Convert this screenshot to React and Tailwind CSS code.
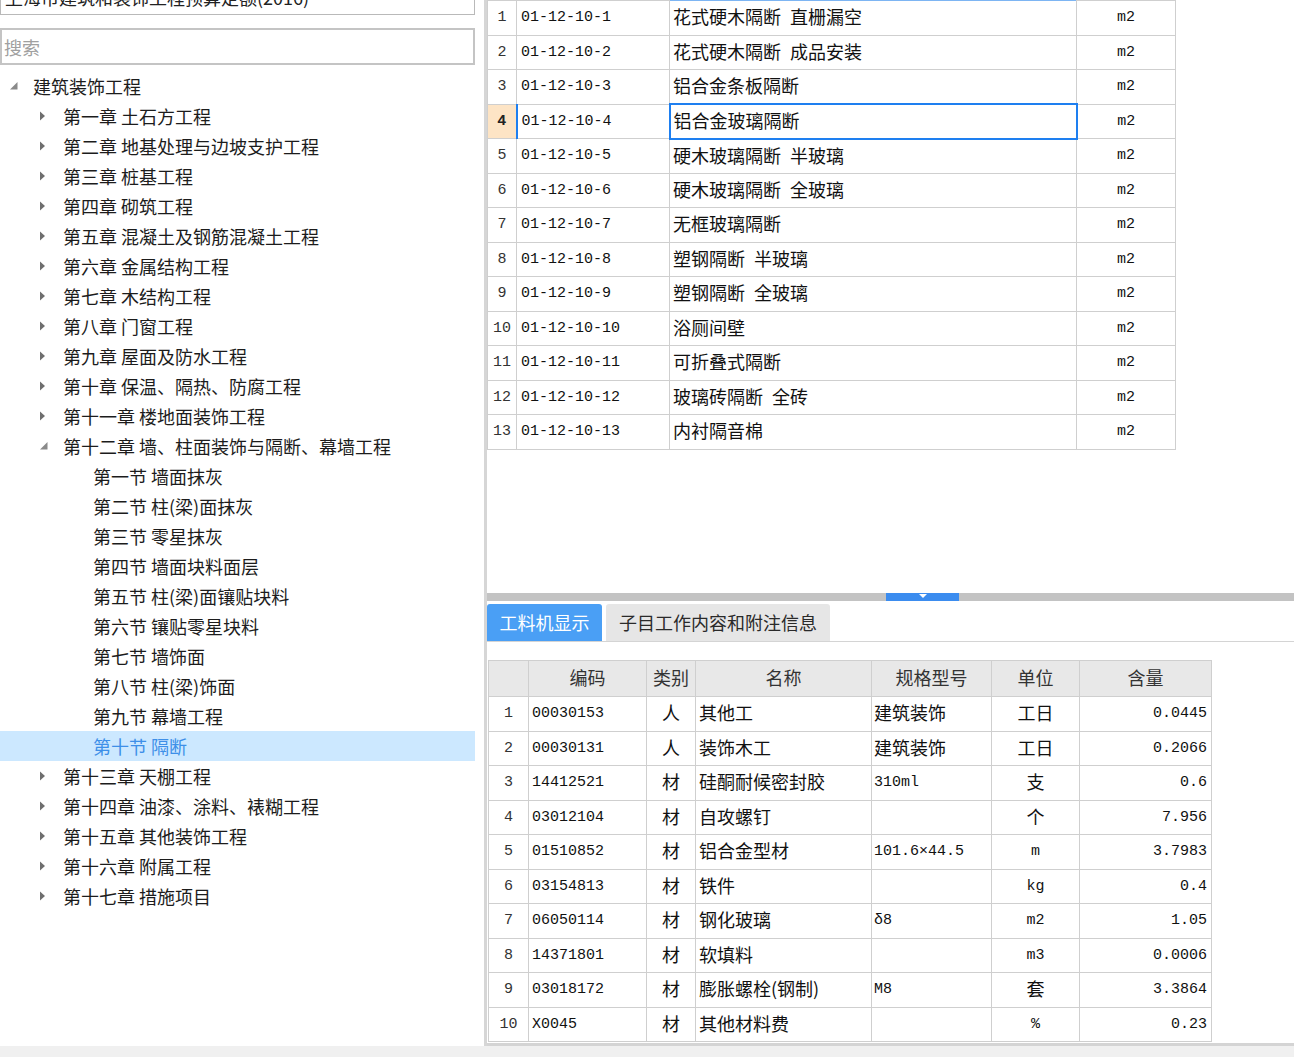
import React from "react";

const cjk = "font-['Noto_Sans_CJK_SC','Noto_Sans_CJK_TC',sans-serif]";
const mono = "font-['Liberation_Mono','Noto_Sans_CJK_SC',monospace]";

const tree = [
  { t: "建筑装饰工程", lvl: 0, exp: true },
  { t: "第一章 土石方工程", lvl: 1 },
  { t: "第二章 地基处理与边坡支护工程", lvl: 1 },
  { t: "第三章 桩基工程", lvl: 1 },
  { t: "第四章 砌筑工程", lvl: 1 },
  { t: "第五章 混凝土及钢筋混凝土工程", lvl: 1 },
  { t: "第六章 金属结构工程", lvl: 1 },
  { t: "第七章 木结构工程", lvl: 1 },
  { t: "第八章 门窗工程", lvl: 1 },
  { t: "第九章 屋面及防水工程", lvl: 1 },
  { t: "第十章 保温、隔热、防腐工程", lvl: 1 },
  { t: "第十一章 楼地面装饰工程", lvl: 1 },
  { t: "第十二章 墙、柱面装饰与隔断、幕墙工程", lvl: 1, exp: true },
  { t: "第一节 墙面抹灰", lvl: 2 },
  { t: "第二节 柱(梁)面抹灰", lvl: 2 },
  { t: "第三节 零星抹灰", lvl: 2 },
  { t: "第四节 墙面块料面层", lvl: 2 },
  { t: "第五节 柱(梁)面镶贴块料", lvl: 2 },
  { t: "第六节 镶贴零星块料", lvl: 2 },
  { t: "第七节 墙饰面", lvl: 2 },
  { t: "第八节 柱(梁)饰面", lvl: 2 },
  { t: "第九节 幕墙工程", lvl: 2 },
  { t: "第十节 隔断", lvl: 2, sel: true },
  { t: "第十三章 天棚工程", lvl: 1 },
  { t: "第十四章 油漆、涂料、裱糊工程", lvl: 1 },
  { t: "第十五章 其他装饰工程", lvl: 1 },
  { t: "第十六章 附属工程", lvl: 1 },
  { t: "第十七章 措施项目", lvl: 1 },
];

const items = [
  ["01-12-10-1", "花式硬木隔断\u2002直栅漏空"],
  ["01-12-10-2", "花式硬木隔断\u2002成品安装"],
  ["01-12-10-3", "铝合金条板隔断"],
  ["01-12-10-4", "铝合金玻璃隔断"],
  ["01-12-10-5", "硬木玻璃隔断\u2002半玻璃"],
  ["01-12-10-6", "硬木玻璃隔断\u2002全玻璃"],
  ["01-12-10-7", "无框玻璃隔断"],
  ["01-12-10-8", "塑钢隔断\u2002半玻璃"],
  ["01-12-10-9", "塑钢隔断\u2002全玻璃"],
  ["01-12-10-10", "浴厕间壁"],
  ["01-12-10-11", "可折叠式隔断"],
  ["01-12-10-12", "玻璃砖隔断\u2002全砖"],
  ["01-12-10-13", "内衬隔音棉"],
];

// [code, type, name, spec, specMono, unit, unitMono, qty]
const materials = [
  ["00030153", "人", "其他工", "建筑装饰", false, "工日", false, "0.0445"],
  ["00030131", "人", "装饰木工", "建筑装饰", false, "工日", false, "0.2066"],
  ["14412521", "材", "硅酮耐候密封胶", "310ml", true, "支", false, "0.6"],
  ["03012104", "材", "自攻螺钉", "", true, "个", false, "7.956"],
  ["01510852", "材", "铝合金型材", "101.6×44.5", true, "m", true, "3.7983"],
  ["03154813", "材", "铁件", "", true, "kg", true, "0.4"],
  ["06050114", "材", "钢化玻璃", "δ8", true, "m2", true, "1.05"],
  ["14371801", "材", "软填料", "", true, "m3", true, "0.0006"],
  ["03018172", "材", "膨胀螺栓(钢制)", "M8", true, "套", false, "3.3864"],
  ["X0045", "材", "其他材料费", "", true, "%", true, "0.23"],
];

const Arrow = ({ open }) =>
  open ? (
    <svg width="8" height="8" viewBox="0 0 8 8">
      <polygon points="7.5,0 7.5,7.5 0,7.5" fill="#8a8a8a" />
    </svg>
  ) : (
    <svg width="6" height="10" viewBox="0 0 6 10">
      <polygon points="0,0.5 5,5 0,9.5" fill="#6e6e6e" />
    </svg>
  );

const cell = "border border-[#cfcfcf]";
const monoCell = `${mono} text-[15px] pt-[1px]`;
const cjkCell = "text-[18px] leading-none pb-[3px]";

export default function App() {
  return (
    <div className={`w-[1294px] h-[1057px] overflow-hidden bg-white flex flex-col ${cjk}`}>
      <div className="h-[1046px] flex">
        {/* left tree panel */}
        <div className="w-[476px] flex flex-col">
          <div className="-mt-[21px] h-[36px] w-[475px] border border-[#b9b9b9] flex items-center pl-[4px] text-[18px] text-[#222] leading-none">
            上海市建筑和装饰工程预算定额(2016)
          </div>
          <div className="mt-[13px] h-[37px] w-[475px] border-2 border-[#c4c4c4] flex items-center pl-[2px] text-[18px] text-[#a0a0a0] leading-none">
            搜索
          </div>
          <div className="mt-[6px] flex flex-col">
            {tree.map((n, i) => (
              <div
                key={i}
                className={`h-[30px] w-[475px] flex items-center text-[18px] leading-none pb-[1px] ${
                  n.sel ? "bg-[#cce8ff] text-[#3d8fe8]" : "text-[#1c1c1c]"
                } ${n.lvl === 0 ? "pl-[10px]" : n.lvl === 1 ? "pl-[40px]" : "pl-[93px]"}`}
              >
                {n.lvl < 2 && (
                  <span className="w-[23px] flex items-center">
                    <Arrow open={n.exp} />
                  </span>
                )}
                <span>{n.t}</span>
              </div>
            ))}
          </div>
        </div>

        {/* right panel */}
        <div className="ml-[8px] flex-1 flex flex-col border-l-[3px] border-[#d6d6d6]">
          <div className="h-[593px]">
            <table className="table-fixed border-collapse w-[688px] text-[#111]">
              <colgroup>
                <col className="w-[29px]" />
                <col className="w-[153px]" />
                <col className="w-[407px]" />
                <col className="w-[99px]" />
              </colgroup>
              <tbody>
                {items.map(([code, name], i) => {
                  const sel = i === 3;
                  return (
                    <tr key={code} className="h-[34.5px]">
                      <td
                        className={`${cell} text-center ${monoCell} ${
                          sel ? "bg-[#fde4c5] font-bold text-[#222]" : "text-[#333]"
                        }`}
                      >
                        {i + 1}
                      </td>
                      <td
                        className={`pl-[4px] ${monoCell} ${
                          sel
                            ? "border-y border-r border-y-[#cfcfcf] border-r-[#cfcfcf] border-l-2 border-l-[#1e7ff0]"
                            : cell
                        }`}
                      >
                        {code}
                      </td>
                      <td
                        className={`pl-[3px] ${cjkCell} ${
                          sel
                            ? "border-2 border-[#1e7ff0]"
                            : i === 0
                            ? "border border-x-[#cfcfcf] border-b-[#cfcfcf] border-t-[#7db5f3]"
                            : cell
                        }`}
                      >
                        {name}
                      </td>
                      <td className={`${cell} text-center ${monoCell}`}>m2</td>
                    </tr>
                  );
                })}
              </tbody>
            </table>
          </div>

          {/* split bar */}
          <div className="h-[8px] bg-[#c3c3c3] flex">
            <div className="ml-[399px] w-[73px] h-full bg-[#3b8cef] flex justify-center">
              <svg width="8" height="5" viewBox="0 0 8 5" className="mt-[1px]">
                <polygon points="0,0 8,0 4,4" fill="#ffffff" />
              </svg>
            </div>
          </div>

          {/* tabs */}
          <div className="mt-[3px] h-[38px] flex items-end gap-[4px] border-b border-[#d4d4d4]">
            <div className="h-[37px] w-[115px] rounded-t-[3px] bg-[#4a9ff5] text-white text-[18px] flex items-center justify-center pb-[1px]">
              工料机显示
            </div>
            <div className="h-[37px] w-[224px] rounded-t-[3px] bg-[#e6e6e6] text-[#2a2a2a] text-[18px] flex items-center justify-center pb-[1px]">
              子目工作内容和附注信息
            </div>
          </div>

          {/* materials table */}
          <div className="flex-1 pt-[18px] pl-[1px] border-b-[3px] border-[#d4d4d4]">
            <table className="table-fixed border-collapse w-[723px] text-[#111]">
              <colgroup>
                <col className="w-[40px]" />
                <col className="w-[118px]" />
                <col className="w-[49px]" />
                <col className="w-[176px]" />
                <col className="w-[120px]" />
                <col className="w-[88px]" />
                <col className="w-[132px]" />
              </colgroup>
              <thead>
                <tr className="h-[36px] bg-[#e8e8e8] text-[#333] text-[18px]">
                  <th className={`${cell} font-normal`}></th>
                  <th className={`${cell} font-normal pb-[2px]`}>编码</th>
                  <th className={`${cell} font-normal pb-[2px]`}>类别</th>
                  <th className={`${cell} font-normal pb-[2px]`}>名称</th>
                  <th className={`${cell} font-normal pb-[2px]`}>规格型号</th>
                  <th className={`${cell} font-normal pb-[2px]`}>单位</th>
                  <th className={`${cell} font-normal pb-[2px]`}>含量</th>
                </tr>
              </thead>
              <tbody>
                {materials.map(([code, type, name, spec, specMono, unit, unitMono, qty], i) => (
                  <tr key={code} className="h-[34.5px]">
                    <td className={`${cell} text-center ${monoCell} text-[#333]`}>{i + 1}</td>
                    <td className={`${cell} pl-[3px] ${monoCell}`}>{code}</td>
                    <td className={`${cell} text-center ${cjkCell}`}>{type}</td>
                    <td className={`${cell} pl-[3px] ${cjkCell}`}>{name}</td>
                    <td className={`${cell} pl-[2px] ${specMono ? monoCell : cjkCell}`}>{spec}</td>
                    <td className={`${cell} text-center ${unitMono ? monoCell : cjkCell}`}>{unit}</td>
                    <td className={`${cell} text-right pr-[4px] ${monoCell}`}>{qty}</td>
                  </tr>
                ))}
              </tbody>
            </table>
          </div>
        </div>
      </div>
      <div className="flex-1 bg-[#f0f0f0]" />
    </div>
  );
}
